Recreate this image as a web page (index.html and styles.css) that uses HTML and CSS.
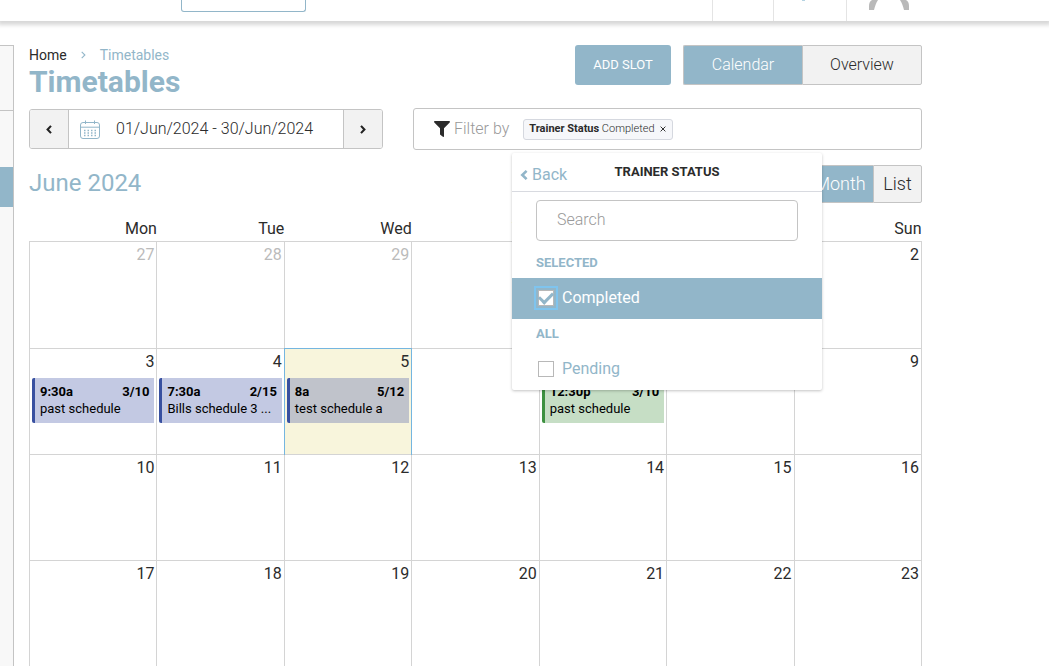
FILE: index.html
```html
<!DOCTYPE html>
<html lang="en">
<head>
<meta charset="utf-8">
<meta name="viewport" content="width=device-width, initial-scale=1">
<title>Timetables</title>
<link rel="stylesheet" href="styles.css">
</head>
<body>
<header class="topbar">
  <button class="topbar-select" type="button" aria-label="Location"></button>
  <div class="topbar-tools">
    <button class="tool" type="button" aria-label="Messages"></button>
    <button class="tool tool-wide" type="button" aria-label="Notifications"><span class="tool-dot"></span></button>
    <button class="tool tool-user" type="button" aria-label="Account">
      <svg class="avatar" width="40" height="10" viewBox="0 0 40 10"><path fill="#b9b9b9" d="M0 10V6C0 3 1 1 3 0H9C7 3 6 6 5 10ZM40 10V6C40 3 39 1 37 0H31C33 3 34 6 35 10Z"/></svg>
    </button>
  </div>
</header>
<div class="layout">
  <nav class="sidebar" aria-label="Main menu">
    <div class="side-head"></div>
    <div class="side-group"></div>
    <div class="side-active"></div>
    <div class="side-rest"></div>
  </nav>
  <main class="main">
    <div class="page-head">
      <div>
        <nav class="crumbs" aria-label="Breadcrumb">
          <a class="crumb-home" href="#">Home</a>
          <svg width="5" height="8" viewBox="0 0 5 8"><path d="M.7.8 3.9 4 .7 7.2" fill="none" stroke="#92b6c9" stroke-width="1.1"/></svg>
          <a class="crumb-here" href="#">Timetables</a>
        </nav>
        <h1 class="title">Timetables</h1>
      </div>
      <div class="head-actions">
        <button class="add" type="button">ADD SLOT</button>
        <div class="switch">
          <button class="switch-btn on" type="button">Calendar</button>
          <button class="switch-btn" type="button">Overview</button>
        </div>
      </div>
    </div>

    <div class="controls">
      <div class="range">
        <button class="range-step" type="button" aria-label="Previous"><svg width="6" height="9" viewBox="0 0 6 9"><path d="M5 .9 1.6 4.5 5 8.1" fill="none" stroke="#222" stroke-width="2.1"/></svg></button>
        <button class="range-date" type="button">
          <svg width="20" height="19" viewBox="0 0 20 19"><g fill="none" stroke="#92b6c9"><rect x=".5" y="2.5" width="19" height="16" rx="2.5"/><path d="M.5 7.2h19M5.5.5v3.500M14.500.5v3.500"/><path d="M4 10.500h12.500M4 13h12.500M4 15.500h12.500" stroke-width="1.500" stroke-dasharray="1.500 2"/></g></svg>
          <span>01/Jun/2024 - 30/Jun/2024</span>
        </button>
        <button class="range-step" type="button" aria-label="Next"><svg width="6" height="9" viewBox="0 0 6 9"><path d="M1 .9 4.400 4.500 1 8.100" fill="none" stroke="#222" stroke-width="2.100"/></svg></button>
      </div>
      <div class="filter">
        <svg width="16" height="16" viewBox="0 0 16 16"><path fill="#2b2b2b" d="M.8 0h14.400c.8 0 1 .8.500 1.400L10 7.300V15.200c0 .7-.6 1-1.100.6L6.300 13.800A1 1 0 0 1 6 13V7.300L.3 1.400C-.2.8 0 0 .8 0Z"/></svg>
        <span class="filter-label">Filter by</span>
        <span class="chip"><span><b>Trainer Status</b> Completed</span>
          <button class="chip-x" type="button" aria-label="Remove filter"><svg width="6" height="6" viewBox="0 0 6 6"><path d="m.6.6 4.800 4.800M5.400.6.6 5.400" stroke="#333" stroke-width="1"/></svg></button></span>
        <section class="menu">
          <div class="menu-head">
            <button class="back" type="button"><svg width="8" height="10" viewBox="0 0 8 10"><path d="M6.600.9 2.300 5l4.300 4.100" fill="none" stroke="#92b6c9" stroke-width="2.600"/></svg>Back</button>
            <h2 class="menu-title">TRAINER STATUS</h2>
          </div>
          <div class="menu-search"><input class="search" type="text" placeholder="Search" aria-label="Search"></div>
          <h3 class="menu-group">SELECTED</h3>
          <label class="option chosen"><input class="check focus" type="checkbox" checked><span>Completed</span></label>
          <h3 class="menu-group">ALL</h3>
          <label class="option"><input class="check" type="checkbox"><span>Pending</span></label>
        </section>
      </div>
    </div>

    <div class="month-bar">
      <h2 class="month">June 2024</h2>
      <div class="switch">
        <button class="switch-btn small on" type="button">Month</button>
        <button class="switch-btn small" type="button">List</button>
      </div>
    </div>

    <table class="calendar">
      <thead><tr><th>Mon</th><th>Tue</th><th>Wed</th><th>Thu</th><th>Fri</th><th>Sat</th><th>Sun</th></tr></thead>
      <tbody>
        <tr class="first"><td class="other">27</td><td class="other">28</td><td class="other">29</td><td class="other">30</td><td class="other">31</td><td>1</td><td>2</td></tr>
        <tr>
          <td>3<a class="event" href="#"><span class="event-top"><b>9:30a</b><b>3/10</b></span><span class="event-name">past schedule</span></a></td>
          <td>4<a class="event" href="#"><span class="event-top"><b>7:30a</b><b>2/15</b></span><span class="event-name">Bills schedule 3 ...</span></a></td>
          <td class="today">5<a class="event" href="#"><span class="event-top"><b>8a</b><b>5/12</b></span><span class="event-name">test schedule a</span></a></td>
          <td>6</td>
          <td>7<a class="event green" href="#"><span class="event-top"><b>12:30p</b><b>3/10</b></span><span class="event-name">past schedule</span></a></td>
          <td>8</td><td>9</td>
        </tr>
        <tr><td>10</td><td>11</td><td>12</td><td>13</td><td>14</td><td>15</td><td>16</td></tr>
        <tr><td>17</td><td>18</td><td>19</td><td>20</td><td>21</td><td>22</td><td>23</td></tr>
      </tbody>
    </table>
  </main>
</div>
</body>
</html>
```
FILE: styles.css
```css
* { box-sizing: border-box; }
html { overflow: hidden; }
body { margin: 0; background: #fff; color: #2b2b2b; font: 16px/20px Roboto, "Liberation Sans", sans-serif; }
h1, h2, h3 { margin: 0; }
button, input { font: inherit; color: inherit; margin: 0; }
button { background: none; border: 0; padding: 0; cursor: pointer; }
a { color: inherit; text-decoration: none; }
svg { flex: none; display: block; }

.topbar { display: flex; justify-content: space-between; align-items: flex-start; height: 21px; padding: 0 128px 0 181px; box-shadow: 0 2px 4px 2px #d8d8d8; }
.topbar-select { width: 125px; height: 12px; border: 1px solid #92b6c9; border-top: 0; border-radius: 0 0 3px 3px; }
.topbar-tools { display: flex; height: 21px; }
.tool { display: flex; justify-content: center; align-items: flex-start; width: 61px; border-left: 1px solid #e4e4e4; }
.tool-wide { width: 73px; }
.tool-user { width: 75px; padding-left: 9px; }
.tool-dot { width: 3px; height: 1px; margin-right: 14px; background: #b5d3e2; }

.layout { display: flex; padding-top: 24px; }
.sidebar { display: flex; flex-direction: column; width: 14px; flex: none; border: 1px solid #c4c4c4; border-width: 1px 1px 0 0; background: #f8f8f8; }
.side-head { height: 65px; border-bottom: 1px solid #c4c4c4; }
.side-group { height: 56px; }
.side-active { height: 40px; background: #92b6c9; }
.side-rest { flex: 1; }
.main { flex: 1; min-width: 0; padding: 0 127px 0 15px; }

.page-head { display: flex; justify-content: space-between; height: 63px; }
.crumbs { display: flex; align-items: center; gap: 14px; font-size: 14px; }
.crumb-here { color: #92b6c9; }
.title { color: #92b6c9; font-size: 30px; line-height: 34px; font-weight: 700; }
.head-actions { display: flex; align-items: flex-start; gap: 12px; }
.add { width: 96px; height: 40px; border-radius: 3px; background: #92b6c9; color: #fff; font-size: 13px; }
.switch { display: flex; }
.switch-btn { width: 120px; height: 40px; border: 1px solid #c4c4c4; border-radius: 0 2px 2px 0; background: #f2f2f2; font-weight: 300; }
.switch-btn.on { background: #92b6c9; color: #fff; border-right: 0; border-radius: 2px 0 0 2px; width: 119px; }
.switch-btn.small { width: 49px; height: 38px; font-size: 18px; }
.switch-btn.small.on { width: 67px; }

.controls { display: flex; gap: 30px; align-items: center; }
.range { display: flex; width: 354px; height: 40px; flex: none; border: 1px solid #c4c4c4; border-radius: 3px; overflow: hidden; }
.range-step { display: flex; align-items: center; justify-content: center; width: 38px; background: #f2f2f2; }
.range-date { display: flex; align-items: center; gap: 16px; flex: 1; padding-left: 11px; border: 1px solid #c4c4c4; border-width: 0 1px; font-weight: 300; }
.filter { position: relative; display: flex; align-items: center; flex: 1; height: 42px; padding-left: 20px; border: 1px solid #c4c4c4; border-radius: 3px; }
.filter svg + .filter-label { margin: 0 14px 0 4px; color: #999; font-weight: 300; }
.chip { display: flex; align-items: center; gap: 4px; height: 21px; padding: 0 5px; border: 1px solid #d5d8df; border-radius: 3px; background: #f6f7fa; font-size: 11px; font-weight: 300; }
.chip b { font-weight: 700; }
.chip-x { padding: 1px; }

.menu { position: absolute; z-index: 2; top: 44px; left: 98px; width: 310px; height: 237px; background: #fff; border-radius: 2px; box-shadow: 0 1px 3px rgba(0, 0, 0, .24); }
.menu-head { display: grid; grid-template-columns: 1fr 2fr 1fr; height: 39px; padding: 0 8px; border-bottom: 1px solid #d8dae0; }
.back { display: flex; align-items: center; gap: 4px; padding-top: 6px; color: #92b6c9; }
.menu-title { padding-top: 9px; text-align: center; font-size: 13px; line-height: 20px; font-weight: 700; }
.menu-search { padding: 8px 24px 0; }
.search { display: block; width: 100%; height: 41px; padding: 0 20px 2px; border: 1px solid #c4c4c4; border-radius: 4px; font-weight: 300; background: #fff; }
.search::placeholder { color: #999; opacity: 1; }
.menu-group { height: 30px; padding: 0 24px; color: #92b6c9; font-size: 13px; line-height: 30px; font-weight: 700; }
.menu-search + .menu-group { height: 37px; line-height: 44px; }
.option { display: flex; align-items: center; gap: 8px; height: 41px; padding: 0 26px 1px; color: #92b6c9; }
.option.chosen { background: #92b6c9; color: #fff; }
.check { appearance: none; display: grid; place-items: center; width: 16px; height: 16px; border: 1px solid #b8b8b8; background: #fff; }
.check:checked::after { content: ""; width: 11px; height: 6px; margin-bottom: 3px; border: solid #92b6c9; border-width: 0 0 3px 3px; transform: rotate(-45deg); }
.check.focus { outline: 2px solid #7fc4ee; outline-offset: 2px; }

.month-bar { display: flex; justify-content: space-between; height: 53px; margin-top: 15px; }
.month { color: #92b6c9; font-size: 24px; line-height: 36px; font-weight: 400; }

.calendar { width: 100%; table-layout: fixed; border-collapse: collapse; text-align: right; }
.calendar th { height: 23px; padding: 0; font-weight: 400; line-height: 20px; }
.calendar td { height: 106px; padding: 3px 2px 0; border: 1px solid #d4d4d4; vertical-align: top; }
.calendar .first td { height: 107px; }
.calendar .other { color: #bbb; }
.calendar td.today { background: #f8f5dc; border-color: #75b6e0 #75b6e0 #d4d4d4; border-style: double double solid; }
.event { display: block; margin-top: 6px; height: 45px; padding: 5px 5px 0; border-left: 3px solid #3850a0; border-radius: 2px 0 0 2px; background: #c3c9e3; color: #000; font-size: 13px; line-height: 17px; text-align: left; }
.today .event { background: #c0c3cb; }
.event.green { background: #c6dec5; border-color: #3d9140; }
.event-top { display: flex; justify-content: space-between; }
.event-name { display: block; white-space: nowrap; }
```
